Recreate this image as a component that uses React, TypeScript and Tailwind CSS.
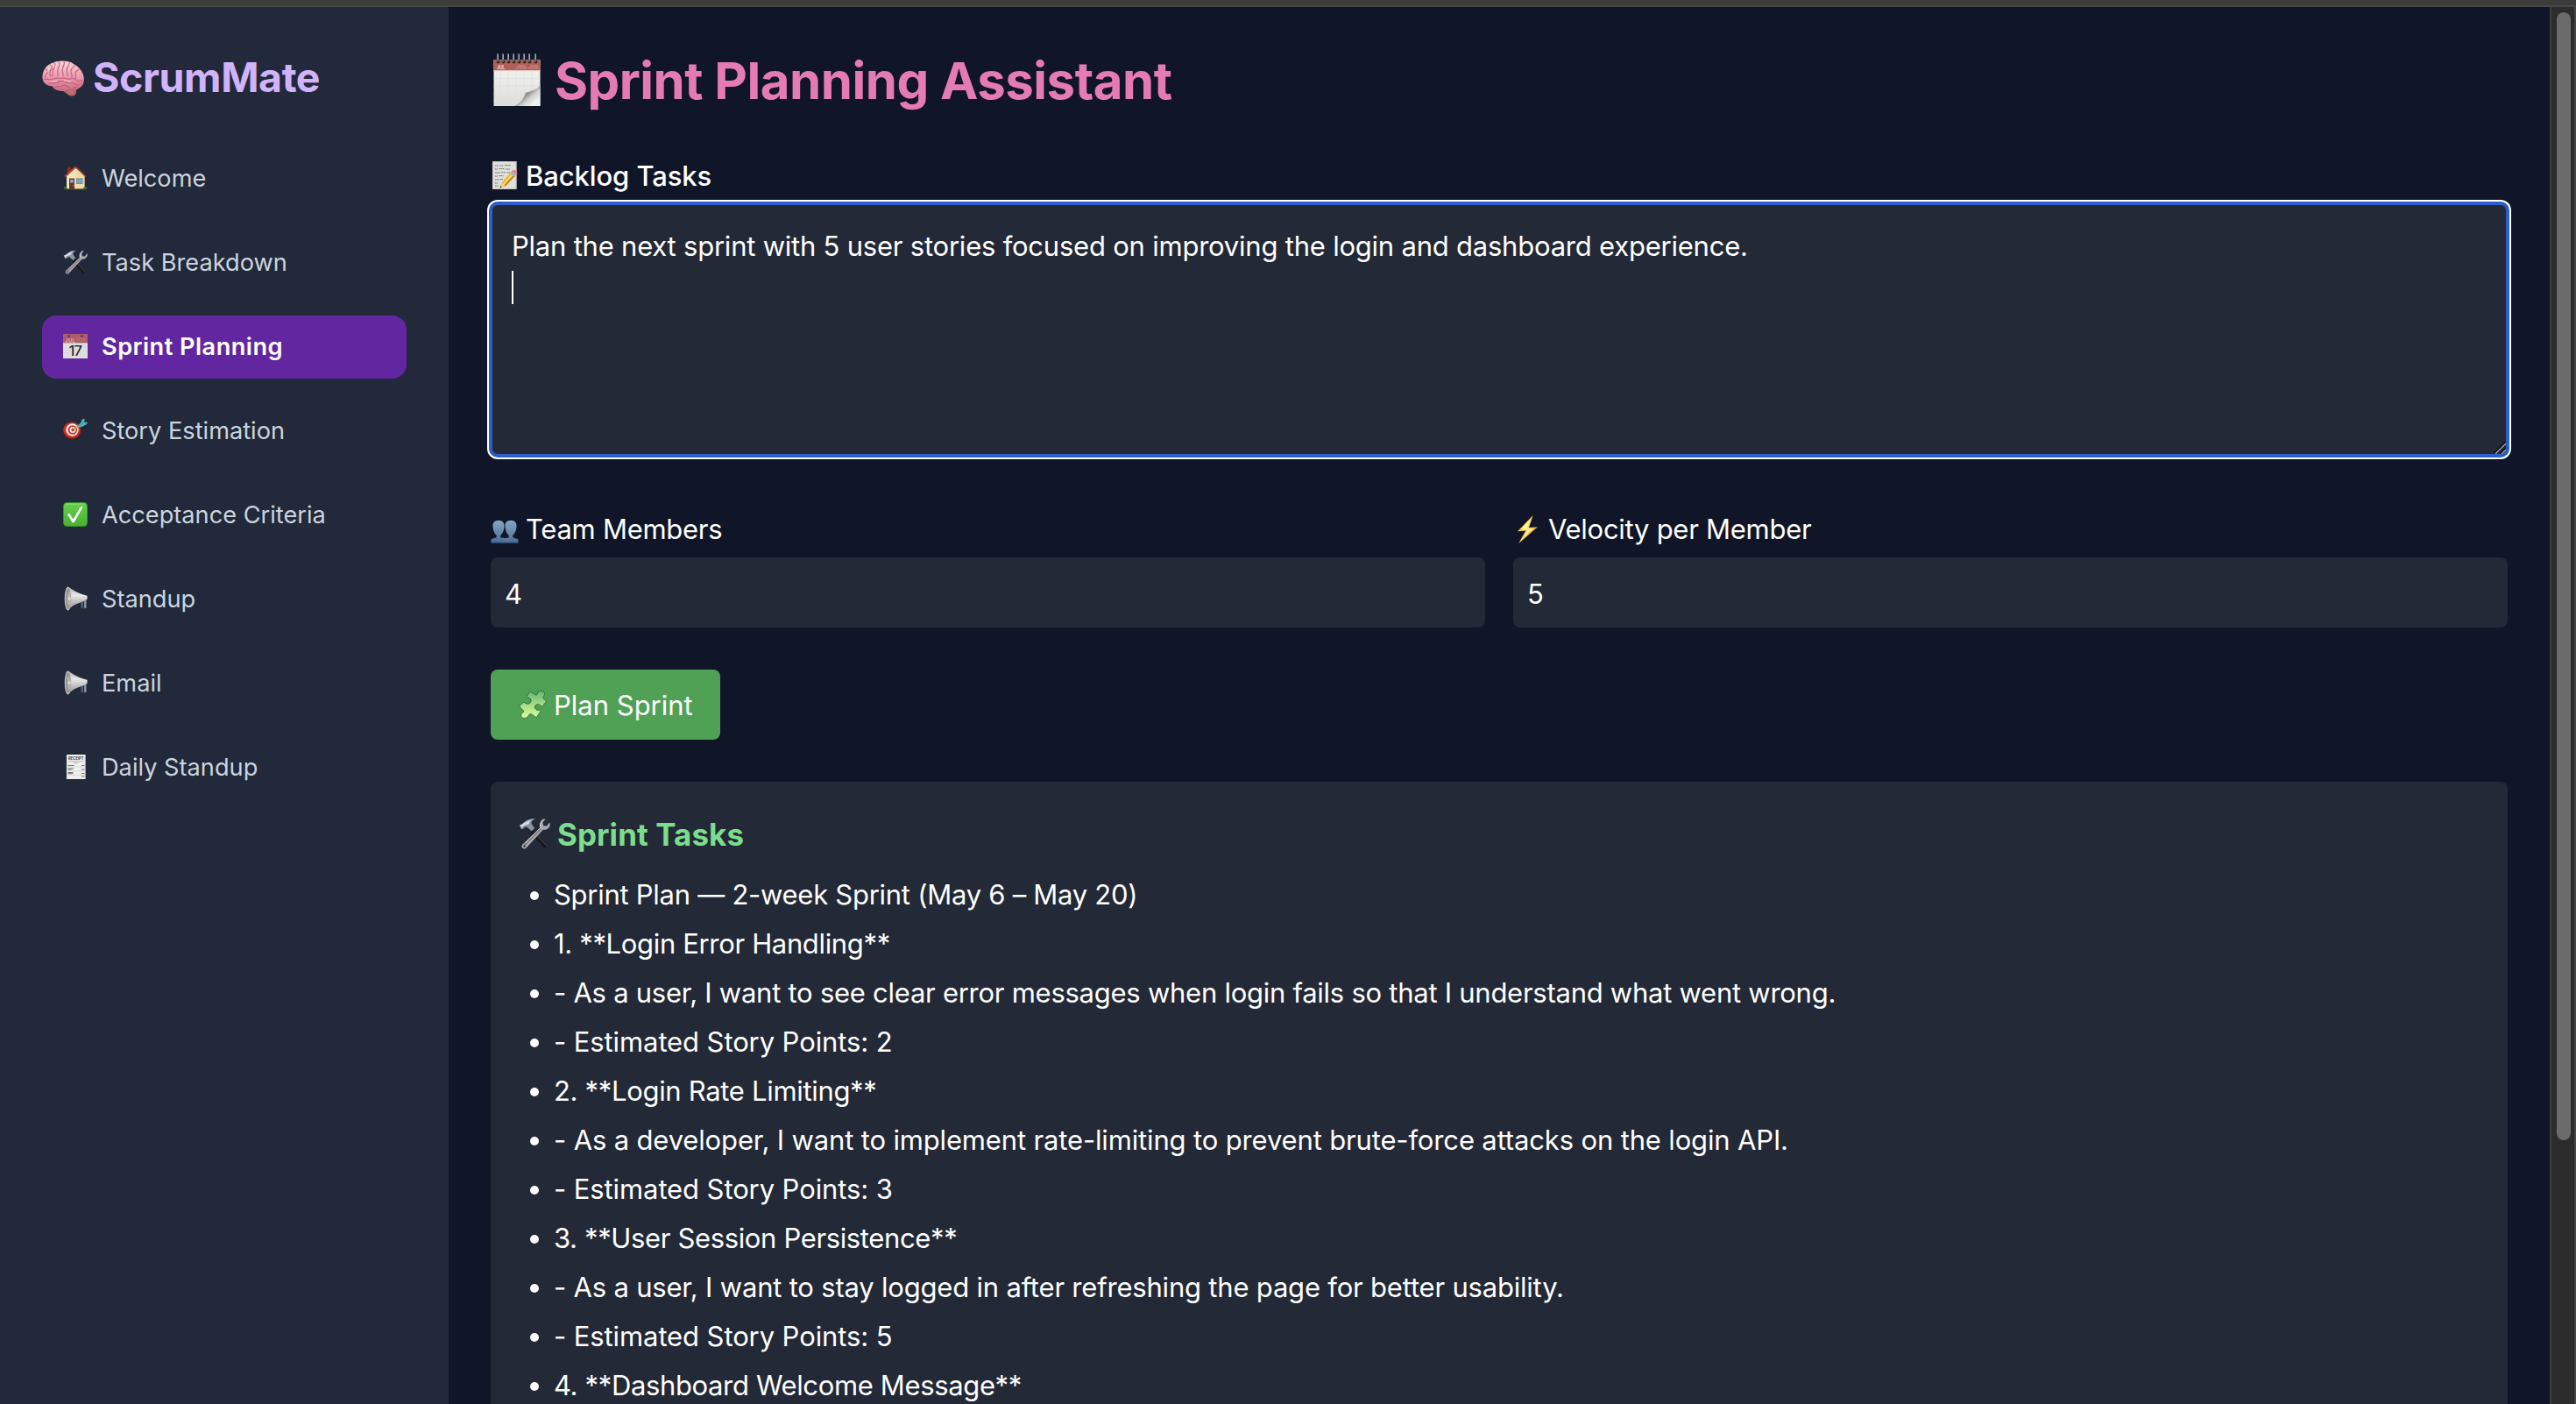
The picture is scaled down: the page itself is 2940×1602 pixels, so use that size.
import type { ReactNode } from "react";

type IconProps = { className?: string };

function Brain({ className }: IconProps) {
  return (
    <svg viewBox="0 0 48 48" className={className}>
      <defs>
        <linearGradient id="brain" x1="0" y1="0" x2="0" y2="1">
          <stop offset="0" stopColor="#fbd3d8" />
          <stop offset="0.5" stopColor="#ee9cb0" />
          <stop offset="1" stopColor="#cf6a86" />
        </linearGradient>
      </defs>
      <path d="M21 37c4 2 7 5 10 7 4 1.500 8 0 8-4l1-5z" fill="#b25a60" />
      <path
        d="M.5 22C1 14 6 8 13 6.500 18 4 30 3.500 36 8c6 3 11 9 11.800 16 .4 5-1.300 9-4.800 11-3 3-7 2-10 2-5 2-11 3-15 1-3-.5-5-2-6-4.500C6 33 0 30 .5 22z"
        fill="url(#brain)"
      />
      <g fill="none" stroke="#c0607b" strokeWidth="1.100" strokeLinecap="round">
        <path d="M4 14c2 0 3 2 2 4s-3 3-2 6M9 9c3 1 3 4 1 6s-1 5 0 7M14 7c2 2 1 5-1 7s0 5-1 8M19 6c3 2 0 5-1 8s1 5 0 8M25 5.500c2 3-2 5-2 9s2 4 1 7M31 6.500c1 3-3 5-3 8s2 4 1 7M37 9c0 3-4 3-4 7s2 4 1 7M42 14c-2 2-4 2-4 5s1 3 0 6" />
        <path d="M2 26c4-2 7 1 11-1s7 0 10-1 6 2 9 1 6 0 8 2 4 0 7-1M8 31c4-3 7 0 10-2s7-2 10 0 7-1 10 2 5 0 7-1M14 35c3-3 6 0 9-2s6 0 8 2M35 36c0-2 3-2 5-1" />
      </g>
      <g fill="none" stroke="#fde0e4" strokeWidth="1" strokeLinecap="round" opacity="0.75">
        <path d="M7 12c1 2 0 4-1 5M16 9c0 2-1 3-1 5M22 8c0 2-1 3-1 6M28 8c-1 2-2 3-2 6M34 10c-1 2-3 2-3 5M10 28c3 0 4 0 7-1M25 27c4 0 5 1 8 1" />
      </g>
      <path d="M25 39c2-2 7-3 13-2 2 1 1 5-3 7-4 0-7-3-10-5z" fill="#b9666a" />
      <path d="M28 40c3-1 6-1 9-1M30 42c2-.5 4-.5 6-.5" stroke="#cf8580" strokeWidth=".7" fill="none" />
    </svg>
  );
}

function House({ className }: IconProps) {
  return (
    <svg viewBox="0 0 28 28" className={className}>
      <path d="M5 1h4v8H5z" fill="#8e2e22" />
      <path d="M4.500 0.800h5v1.500h-5z" fill="#5e1d18" />
      <path d="M4 12 14.500 2.500 24.500 12v15H4z" fill="#f3e3b6" />
      <path d="M14.500 27h10V12l-5-5-5-3z" fill="#ead6a2" opacity=".6" />
      <path d="M14.500 1.200 2 12.500" stroke="#c14a38" strokeWidth="1.600" />
      <path d="M14.500 1.200 26 12.500" stroke="#a8392b" strokeWidth="1.600" />
      <path d="M7 14.500h6V27H7z" fill="#6b3426" />
      <path d="M8.200 16h3.600v3.500H8.200z" fill="#7db6e6" />
      <circle cx="11.700" cy="22.500" r=".6" fill="#e7c65b" />
      <path d="M15 14.300h7.500V21H15z" fill="#9a8567" />
      <path d="M15.800 15h6v5.200h-6z" fill="#5ea2e0" />
      <path d="M18.800 15v5.200M15.800 17.500h6" stroke="#86b9e8" strokeWidth=".6" />
      <path d="M1 26.500q0-3.500 2.500-2.500 1.500 0 1.500 2.500zM23 26.500q0-3 2-2.500 2.500-.5 2.500 2.500z" fill="#3e7b2c" />
      <path d="M2 26.300h24.500v.9H2z" fill="#5a4a3a" />
    </svg>
  );
}

function Tools({ className }: IconProps) {
  return (
    <svg viewBox="0 0 36 36" className={className}>
      <path d="m15.500 14.500 17 18.500-2.600 2.300L13.500 17z" fill="#17181b" />
      <path d="m17.500 17 14.600 15.500" stroke="#4a4d53" strokeWidth="1" />
      <path
        d="M24.500 11.500c-1.700-3.700.5-8.500 5-10.300l1 .3-3.200 4.200 1 3.500 3.600.4 3.300-4 .6 1.300c0 4.500-3.700 7.600-8 6.800L9.500 33.500c-1.300 2.200-3.800 2.500-5.200 1.200s-1-3.800.9-5z"
        fill="#a5a9b1"
      />
      <path d="M24.800 12.500 7 31" stroke="#7a5f63" strokeWidth="1.800" />
      <path d="M28.200 1.800c-3 2-4.200 5.600-3 9.300L8 29" fill="none" stroke="#dfe2e8" strokeWidth=".9" />
      <circle cx="6.500" cy="32.500" r="1.200" fill="#2b3039" />
      <path
        d="M.8 8.500c.7-.9 2.300-.4 3.200-1.300C7 3.800 11 1 19.500 1.200c-3 1-5.200 2.500-5 5.300l3.600 5.500-3.300 3.300-5.300-4.500c-1.900-.7-3.500.5-4.500 2.200L2.800 13z"
        fill="#8d939d"
      />
      <path d="M1.500 8.500C5.500 8 8 2.500 16.500 2c-4 1.500-5 3.500-4.500 5L5 9.800 3 11.500z" fill="#d5dbe5" />
      <path d="M7 5.500c2.500-2.300 5.500-3.500 10-3.800" stroke="#6e99cf" strokeWidth=".8" fill="none" />
    </svg>
  );
}

function CalendarPage({ className }: IconProps) {
  return (
    <svg viewBox="0 0 28 28" className={className}>
      <path d="M0 0h28v28H0z" fill="#dedede" />
      <path d="M0 0h28v10.500H0z" fill="#ad5d63" />
      <path d="M0 10h28v1H0z" fill="#c9b3b5" />
      <circle cx="6.300" cy="2.700" r="1.400" fill="#6326a1" />
      <circle cx="21.500" cy="2.700" r="1.400" fill="#6326a1" />
      <text x="2" y="9.600" fontSize="6" fontWeight="700" fontFamily="Inter, sans-serif" fill="#d9a9ac">JUL</text>
      <path d="M15 7h4M20 7h6M16 5h9" stroke="#bd7479" strokeWidth="1.200" />
      <text x="13.700" y="25" textAnchor="middle" fontSize="16.500" letterSpacing="-1" fontWeight="500" fontFamily="Inter, sans-serif" fill="#2f2f2f">17</text>
    </svg>
  );
}

function Target({ className }: IconProps) {
  return (
    <svg viewBox="0 0 28 28" className={className}>
      <ellipse cx="10.500" cy="14.700" rx="10" ry="9.300" fill="#8f1c16" />
      <ellipse cx="10" cy="13.700" rx="9.800" ry="9.300" fill="#c92f24" />
      <circle cx="10.500" cy="13.500" r="7.200" fill="#f3efec" />
      <circle cx="10.800" cy="13.500" r="5.300" fill="#c92f24" />
      <circle cx="11" cy="13.500" r="3.500" fill="#f3efec" />
      <circle cx="11.200" cy="13.500" r="1.800" fill="#c92f24" />
      <path d="m12 13 7-4.500" stroke="#d59a3c" strokeWidth="1.500" />
      <path d="m16.500 9.500 6.500-5M22 5l.5-3.500M23 5l4.500 1" stroke="#3fa3a9" strokeWidth="2" />
      <path d="m15.500 11 5.500-1 6.500-3.300-5-1zM19 7.500l3.500-6 2-.8-.5 5z" fill="#5dc0c4" />
      <path d="m20 8.500 4.500-5.500" stroke="#25666c" strokeWidth=".8" />
    </svg>
  );
}

function CheckBox({ className }: IconProps) {
  return (
    <svg viewBox="0 0 28 28" className={className}>
      <defs>
        <linearGradient id="check" x1="0" y1="0" x2="0" y2="1">
          <stop offset="0" stopColor="#66d04d" />
          <stop offset="1" stopColor="#4bb033" />
        </linearGradient>
      </defs>
      <rect width="28" height="28" rx="4.500" fill="#2f8d25" />
      <rect x=".8" y="1" width="26.400" height="26" rx="4" fill="url(#check)" />
      <path d="M3 2.200h22" stroke="#8be072" strokeWidth=".9" />
      <path d="M4.700 13.200h3l3.800 6.200L20.200 5h2.600L12.600 23.200h-2z" fill="#fff" />
    </svg>
  );
}

function Megaphone({ className }: IconProps) {
  return (
    <svg viewBox="0 0 28 28" className={className}>
      <defs>
        <linearGradient id="horn" x1="0" y1="0" x2="0" y2="1">
          <stop offset="0" stopColor="#a8a8a8" />
          <stop offset="0.35" stopColor="#e9e9e9" />
          <stop offset="1" stopColor="#8c8888" />
        </linearGradient>
      </defs>
      <path d="M20 11.500h7.700v3l-.8 1V26h-2V15.500l-1.900.2V26h-2.500z" fill="#55606d" />
      <path d="M24.300 11.300h1.400V26h-1.400z" fill="#a6bad0" />
      <path d="M20 24.800h7v1.600h-7z" fill="#34302f" />
      <path d="M6 .5c1 .5 9 7.500 21.500 10.200v3.800C24 18.500 12 18.500 6 27.500z" fill="url(#horn)" />
      <ellipse cx="5.500" cy="14" rx="3.800" ry="13.500" fill="#c4c2c0" />
      <ellipse cx="5.800" cy="14" rx="2.900" ry="12" fill="#94918f" />
      <ellipse cx="6.600" cy="14" rx="1.900" ry="8" fill="#b5b2b0" />
      <circle cx="7" cy="14" r="1.700" fill="#ddd" />
    </svg>
  );
}

function Receipt({ className }: IconProps) {
  return (
    <svg viewBox="0 0 28 28" className={className}>
      <path d="M4 0h21.500v28H4z" fill="#efefed" />
      <path d="M4.200 0v28M25.300 0v28" stroke="#b9b9b9" strokeWidth=".6" />
      <text x="14.800" y="6" textAnchor="middle" fontSize="4.200" fontWeight="700" fontFamily="Inter, sans-serif" fill="#3b3b3b">RECEIPT</text>
      <path d="M6.500 7.700h17M12 9.500h5" stroke="#a5a5a5" strokeWidth=".8" />
      <path d="M5.500 12.500h7M5.500 16h6.500M5.500 17h4M5.500 20.500h6M5.500 21.700h6M21 12.500h3.500M21 17h3.500M21 21.500h3.500M21 25h3.500" stroke="#707070" strokeWidth="1" />
      <path d="M5.500 14h19M5.500 18.700h19M5.500 23.300h19" stroke="#cfcfcf" strokeWidth=".7" />
    </svg>
  );
}

const rings = [8, 14, 20, 26, 32, 38, 44, 51];

function SpiralCalendar({ className }: IconProps) {
  return (
    <svg viewBox="0 0 60 60" className={className}>
      <defs>
        <linearGradient id="page" x1="0" y1="0" x2="0" y2="1">
          <stop offset="0" stopColor="#f7f7f5" />
          <stop offset="1" stopColor="#dcdcdb" />
        </linearGradient>
        <linearGradient id="curl" gradientUnits="userSpaceOnUse" x1="38" y1="42" x2="50" y2="56">
          <stop offset="0" stopColor="#6a6a68" />
          <stop offset="0.3" stopColor="#8f8f8d" />
          <stop offset="0.6" stopColor="#cfcfcd" />
          <stop offset="1" stopColor="#f1f1ef" />
        </linearGradient>
      </defs>
      <path d="M3.500 7h53v53h-53z" fill="url(#page)" />
      <path d="M3.500 20h53M3.500 28.500h53M3.500 37h53M3.500 45.500h53M3.500 54h40M11 20v40M20 20v40M29 20v40M38 20v30M47 20v24" stroke="#dfdfdd" strokeWidth=".8" />
      <path d="M3.500 7h53v12.500h-53z" fill="#b0605b" />
      <path d="M3.500 19h53v.8h-53z" fill="#e8d5d3" />
      <text x="7" y="18.300" fontSize="5.500" fontWeight="700" fontFamily="Inter, sans-serif" fill="#ecd1ce">JUL</text>
      <path d="M29 16.500h12M43 16.500h12M31 14h9M45 14h9" stroke="#c58580" strokeWidth="1.500" />
      <path d="M56.500 35C54 42 47 42 40 45c-2 6-6 12-13 15h29.500z" fill="url(#curl)" />
      {rings.map((x) => (
        <g key={x}>
          <circle cx={x + 0.5} cy="9.500" r="1.900" fill="#30201f" />
          <path d={`M${x} 1v8`} stroke="#5a6470" strokeWidth="2.200" strokeLinecap="round" />
          <path d={`M${x + 0.3} 1v6`} stroke="#c6ced8" strokeWidth=".8" />
        </g>
      ))}
    </svg>
  );
}

function Memo({ className }: IconProps) {
  return (
    <svg viewBox="0 0 32 32" className={className}>
      <path d="M2 0h27.500v32H2z" fill="#dfdfdc" />
      <path d="M2.400 .4h26.700v31.200H2.400z" fill="none" stroke="#bcbcb8" strokeWidth=".8" />
      <path
        d="M5 5h4M10.500 5h4M16 4.600h7M5 9h3M9.500 8.600h6M17 9h5M5 13h6M12.500 12.600h5M19 13h3M5 17h3M9.500 16.600h5M5 21h5M5 25h3M5 28h4M11 20.600h3"
        stroke="#6d6d6d"
        strokeWidth="1"
        strokeDasharray="1.600 .5"
      />
      <path d="m10.500 30.500 1.700-5.800 11-12.400 4.700 4.200-11.300 12.300z" fill="#f0bd36" />
      <path d="m14.500 27.500 11.300-13" stroke="#fbe08a" strokeWidth="1.500" />
      <path d="m16.600 28.800 11.300-12.300-1.300-1.200-11.600 12.500z" fill="#b97f18" />
      <path d="m10.500 30.500 1.700-5.800c2 .3 4 2 4.400 4.100z" fill="#e9cf9c" />
      <path d="m10.500 30.500.7-2.500 1.700 1.600z" fill="#333" />
      <path d="m22.200 13.300 2-2.200 4.700 4.200-2 2.200z" fill="#9db9c9" />
      <path d="m24 11.300 1.300-1.300c2-1 5.700 2 4.900 4.200l-1.300 1.300z" fill="#e8848a" />
    </svg>
  );
}

function People({ className }: IconProps) {
  return (
    <svg viewBox="0 0 32 32" className={className}>
      <defs>
        <linearGradient id="bust" x1="0" y1="0" x2="0" y2="1">
          <stop offset="0" stopColor="#86a6c5" />
          <stop offset="1" stopColor="#4b6d94" />
        </linearGradient>
      </defs>
      <path
        d="M.5 31.500v-3.700c0-1.300 3.500-1.600 6.200-2.600v-2.300C4.500 21 2.800 17.500 2.500 13 2 8.500 4.500 5.700 9 5.700s7 2.800 6.500 7.300c-.3 4.500-2 8-4.200 9.900v2.300l4.700 1.400 4.700-1.400v-2.300c-2.200-1.900-3.900-5.400-4.200-9.900-.5-4.500 2-7.300 6.500-7.300s7 2.800 6.500 7.300c-.3 4.500-2 8-4.200 9.900v2.300c2.700 1 6.200 1.300 6.200 2.600v3.700z"
        fill="url(#bust)"
      />
      <path d="M14 26c3 .8 5 1.600 6.200 4" stroke="#7594b6" strokeWidth=".7" fill="none" />
      <path d="M.5 31h31" stroke="#35527a" strokeWidth=".8" />
    </svg>
  );
}

function Bolt({ className }: IconProps) {
  return (
    <svg viewBox="0 0 32 32" className={className}>
      <defs>
        <linearGradient id="bolt" x1="0" y1="0" x2="1" y2="0.600">
          <stop offset="0" stopColor="#f08a1d" />
          <stop offset="0.45" stopColor="#ffe66b" />
          <stop offset="1" stopColor="#f08a1d" />
        </linearGradient>
      </defs>
      <path d="M22.500 .3 5 18.200l9.300-.8L6.300 32 28 13.200l-10 .8z" fill="url(#bolt)" />
      <path d="M19.500 5 9.500 16.500l7.500-.8-5 9.300 11.500-10.300-8 .6z" fill="#fff3a0" />
    </svg>
  );
}

function Puzzle({ className }: IconProps) {
  return (
    <svg viewBox="0 0 32 32" className={className}>
      <defs>
        <linearGradient id="puzzle" x1="0" y1="0" x2="0" y2="1">
          <stop offset="0" stopColor="#68b878" />
          <stop offset="0.5" stopColor="#a6dc83" />
          <stop offset="1" stopColor="#dcff9c" />
        </linearGradient>
      </defs>
      <path
        d="M9 6.500 13.500 1l5 3.500c1.500 1 3 .5 3-1.500.3-2.200 2-2.700 4.500-2.500 3 .3 4.300 2.500 3 5-.7 1.500-2 2.500-.5 3.500l3 3.500-4 5c-1 1-2 .5-3-.7-2-1.800-5-1.300-6 1.200-.5 2.500 1.500 4.500 4 4.300 1.500-.1 2.800.2 2.300 1.700L20 30.800 14.800 27c-1.500-1-2.800 0-3.800 1.800-1.500 2.700-4.500 3.200-6.500 2.200-2.500-1.500-2.300-4.700 0-5.800 1.500-.7 1.500-1.700.5-2.700L.6 18l3.900-4c1-1 2-.5 3.500.5 2.500 1.500 5.500.5 6-2.500.3-2.500-1.500-4-3.500-3.800z"
        fill="url(#puzzle)"
        stroke="#1f5b34"
        strokeWidth=".8"
        strokeLinejoin="round"
      />
    </svg>
  );
}

const navItems = [
  { label: "Welcome", Icon: House },
  { label: "Task Breakdown", Icon: Tools },
  { label: "Sprint Planning", Icon: CalendarPage, active: true },
  { label: "Story Estimation", Icon: Target },
  { label: "Acceptance Criteria", Icon: CheckBox },
  { label: "Standup", Icon: Megaphone },
  { label: "Email", Icon: Megaphone },
  { label: "Daily Standup", Icon: Receipt },
];

const tasks = [
  { text: "Sprint Plan — 2-week Sprint (May 6 – May 20)", tracking: "tracking-[-0.27px]" },
  { text: "1. **Login Error Handling**", tracking: "tracking-[-0.34px]" },
  {
    text: "- As a user, I want to see clear error messages when login fails so that I understand what went wrong.",
    tracking: "tracking-[-0.26px]",
  },
  { text: "- Estimated Story Points: 2", tracking: "tracking-[-0.1px]" },
  { text: "2. **Login Rate Limiting**", tracking: "tracking-[-0.32px]" },
  {
    text: "- As a developer, I want to implement rate-limiting to prevent brute-force attacks on the login API.",
    tracking: "tracking-[-0.15px]",
  },
  { text: "- Estimated Story Points: 3", tracking: "tracking-[-0.1px]" },
  { text: "3. **User Session Persistence**", tracking: "tracking-[-0.36px]" },
  {
    text: "- As a user, I want to stay logged in after refreshing the page for better usability.",
    tracking: "tracking-[-0.2px]",
  },
  { text: "- Estimated Story Points: 5", tracking: "tracking-[-0.1px]" },
  { text: "4. **Dashboard Welcome Message**", tracking: "tracking-[-0.36px]" },
];

function Sidebar() {
  return (
    <aside className="w-[512px] shrink-0 bg-[#21293a] p-12">
      <div className="mb-12 flex h-16 items-center pt-0.5 text-[46.500px] font-bold tracking-[-0.4px] text-[#d1b3f9]">
        <Brain className="mr-2.5 size-12" />
        ScrumMate
      </div>
      <nav className="flex flex-col gap-6 text-[27.200px] text-[#cbd4de]">
        {navItems.map(({ label, Icon, active }) => (
          <a
            key={label}
            className={
              active
                ? "flex h-18 items-center gap-4 rounded-2xl bg-[#6326a1] px-6 font-semibold tracking-[0.45px] text-white"
                : "flex h-18 items-center gap-4 rounded-2xl px-6"
            }
          >
            <Icon className="mb-0.5 size-7" />
            {label}
          </a>
        ))}
      </nav>
    </aside>
  );
}

function NumberField({ icon, label, value }: { icon: ReactNode; label: string; value: string }) {
  return (
    <div className="flex flex-col gap-2">
      <label className="flex h-12 items-center gap-2 tracking-[-0.27px]">
        {icon}
        {label}
      </label>
      <input className="h-20 w-full rounded-lg bg-[#232936] px-4 pt-0.5 outline-none" defaultValue={value} />
    </div>
  );
}

function BacklogField() {
  return (
    <div className="flex flex-col gap-2">
      <label className="flex h-12 items-center gap-2 pt-0.5 font-medium tracking-[-0.1px]">
        <Memo className="mb-0.5 size-8" />
        Backlog Tasks
      </label>
      <div className="relative h-72">
        <textarea
          className="block h-full w-full resize-none rounded-lg bg-[#232936] p-6 pt-[25px] leading-12 tracking-[-0.22px] shadow-[inset_0_0_0_2px_#2b60cb,0_0_0_2px_#2b60cb,0_0_0_4px_#ffffff] outline-none"
          defaultValue={"Plan the next sprint with 5 user stories focused on improving the login and dashboard experience.\n"}
        />
        <span className="absolute top-[77px] left-6 h-[38px] w-0.5 bg-white" />
        <svg viewBox="0 0 14 14" className="absolute right-0.5 bottom-0.5 size-3.5">
          <path d="M1 14 14 1M8 14l6-6" stroke="#0c0e14" strokeWidth="3.500" />
          <path d="M2 14 14 2M9 14l5-5" stroke="#a9abb0" strokeWidth="1.400" />
        </svg>
      </div>
    </div>
  );
}

function SprintTasks() {
  return (
    <section className="rounded-lg bg-[#232936] p-8">
      <h2 className="mb-4 flex h-14 items-center gap-2 text-[34.900px] font-bold tracking-[0.1px] text-[#7bde8c]">
        <Tools className="mb-0.5 size-9" />
        Sprint Tasks
      </h2>
      <ul className="flex flex-col gap-2">
        {tasks.map(({ text, tracking }, i) => (
          <li key={i} className="flex h-12 items-center pt-0.5 pl-[13px]">
            <span className="mt-0.5 mr-[17px] size-2.5 rounded-full bg-white" />
            <span className={tracking}>{text}</span>
          </li>
        ))}
      </ul>
    </section>
  );
}

export default function App() {
  return (
    <div className="flex h-[1602px] w-[2940px] flex-col overflow-hidden bg-[#101627] font-['Inter',sans-serif] text-[31px] whitespace-nowrap text-white">
      <div className="h-2 shrink-0 border-b-2 border-[#464846] bg-[#3c3c3c]" />
      <div className="flex min-h-0 flex-1">
        <Sidebar />
        <main className="flex flex-1 flex-col gap-12 p-12 *:shrink-0">
          <h1 className="flex h-18 items-center gap-[13px] pt-0.5 text-[58.200px] font-bold tracking-[-0.52px] text-[#e57bb3]">
            <SpiralCalendar className="mb-1 size-15" />
            Sprint Planning Assistant
          </h1>
          <BacklogField />
          <div className="mt-3 grid grid-cols-2 gap-8">
            <NumberField icon={<People className="size-8" />} label="Team Members" value="4" />
            <NumberField icon={<Bolt className="size-8" />} label="Velocity per Member" value="5" />
          </div>
          <button className="flex h-20 items-center gap-2 self-start rounded-lg bg-[#50a156] pt-0.5 pr-[31px] pl-8">
            <Puzzle className="mb-0.5 size-8" />
            Plan Sprint
          </button>
          <SprintTasks />
        </main>
        <div className="w-[30px] shrink-0 border-x-2 border-l-[#3c3c3c] border-r-[#464646] bg-[#2c2c2c] pt-1.5 pl-1.5">
          <div className="h-[1287px] w-4 rounded-full bg-[#6b6b6b]" />
        </div>
      </div>
    </div>
  );
}
